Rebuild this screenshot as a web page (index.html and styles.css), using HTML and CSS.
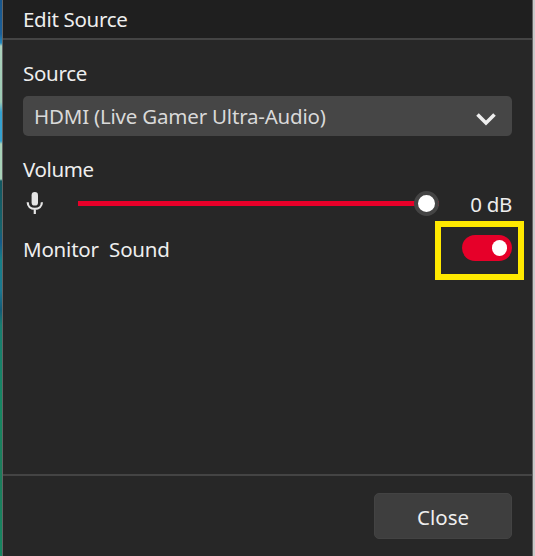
FILE: index.html
```html
<!DOCTYPE html>
<html lang="en">
<head>
<meta charset="utf-8">
<title>Edit Source</title>
<link rel="stylesheet" href="styles.css">
</head>
<body>
<main class="dialog">
  <header class="header"><h1 class="title">Edit Source</h1></header>
  <section class="content">
    <div class="label source-label">Source</div>
    <div class="select" role="combobox" aria-label="Source">
      <span class="select-text">HDMI (Live Gamer Ultra-Audio)</span>
      <svg class="chevron" viewBox="0 0 22 16"><path d="M2.5 3.500 11 12 19.500 3.500"/></svg>
    </div>
    <div class="label volume-label">Volume</div>
    <div class="volume">
      <svg class="mic" viewBox="0 0 18 24"><rect x="5.600" y="1" width="6.400" height="13.600" rx="3.200"/><path d="M1.700 11.200c0 4.200 3 6.600 7.100 6.600s7.100-2.400 7.100-6.600M8.800 17.800v5.200"/></svg>
      <div class="slider"><span class="thumb"></span></div>
      <span class="level">0 dB</span>
    </div>
    <div class="monitor">
      <span class="monitor-label">Monitor&nbsp; Sound</span>
      <div class="toggle"><span class="knob"></span><span class="highlight"></span></div>
    </div>
  </section>
  <footer class="footer"><button class="close"><span>Close</span></button></footer>
</main>
</body>
</html>
```
FILE: styles.css
```css
* { box-sizing: border-box; }
body {
  margin: 0;
  height: 556px;
  overflow: hidden;
  padding: 0 2px;
  background: linear-gradient(#17568c 0, #1b6099 34px, #258ac0 43px, #add2bd 46px, #9dcbb5 102px, #35a2d1 112px, #35a2d1 141px, #a9d2b9 144px, #a9d2b9 179px, #125761 181px, #16636c 230px, #145a8a 242px, #168087 260px, #1b7891 290px, #125b78 310px, #187e70 325px, #168761 410px, #1c7c5b 470px, #168661 556px) left / 2px 100% no-repeat, #c9c9c9;
  font-family: "Noto Sans", "Open Sans", sans-serif;
  font-size: 20.5px;
  line-height: 28px;
  color: #eee;
}
.dialog {
  height: 556px;
  display: flex;
  flex-direction: column;
  background: #272727;
  border: solid #646464;
  border-width: 0 1px;
}
.header {
  height: 40px;
  padding: 5px 20px 0;
  background: #1f1f1f;
  border-bottom: 2px solid #444;
}
.title { margin: 0; font: inherit; letter-spacing: -0.3px; }
.content { flex: 1; padding: 19px 20px 0; }
.label { height: 28px; }
.source-label { letter-spacing: -0.3px; }
.select {
  width: 489px;
  height: 40px;
  margin-top: 9px;
  padding: 0 15px 0 11px;
  display: flex;
  align-items: center;
  justify-content: space-between;
  border-radius: 5px;
  background: #464646;
  color: #d9d9d9;
}
.select-text { letter-spacing: -0.2px; }
.chevron { width: 22px; height: 16px; margin-top: 5px; fill: none; stroke: #eee; stroke-width: 3.6; }
.volume-label { margin-top: 19px; letter-spacing: -0.4px; }
.volume { display: flex; align-items: center; width: 489px; height: 40px; }
.mic { width: 18px; height: 24px; margin: -1px 0 0 3px; fill: #e5e5e5; }
.mic path { fill: none; stroke: #e5e5e5; stroke-width: 2.2; }
.slider {
  width: 361px;
  height: 25px;
  margin-left: 33.5px;
  display: flex;
  align-items: center;
  justify-content: flex-end;
  background: linear-gradient(#e80029, #e80029) center / 100% 5px no-repeat;
}
.thumb { width: 25px; height: 25px; border: 4.5px solid #444; border-radius: 50%; background: #fff; }
.level { margin: 2px 0 0 auto; letter-spacing: -0.3px; }
.monitor { width: 489px; margin-top: 12px; display: flex; justify-content: space-between; }
.monitor-label { letter-spacing: -0.2px; }
.toggle {
  position: relative;
  width: 50px;
  height: 26px;
  padding-right: 5px;
  display: flex;
  align-items: center;
  justify-content: flex-end;
  border-radius: 13px;
  background: #e60029;
}
.knob { width: 15.5px; height: 15.5px; border-radius: 50%; background: #fff; }
.highlight { position: absolute; left: -27px; top: -14px; width: 89px; height: 59px; border: 6px solid #ffe900; }
.footer { height: 82px; padding: 17px 20px 0; border-top: 2px solid #444; display: flex; justify-content: flex-end; }
.close {
  width: 138px;
  height: 46px;
  padding: 2px 0 0;
  border: 1px solid #434343;
  border-radius: 5px;
  background: #3e3e3e;
  color: inherit;
  font: inherit;
}
```
